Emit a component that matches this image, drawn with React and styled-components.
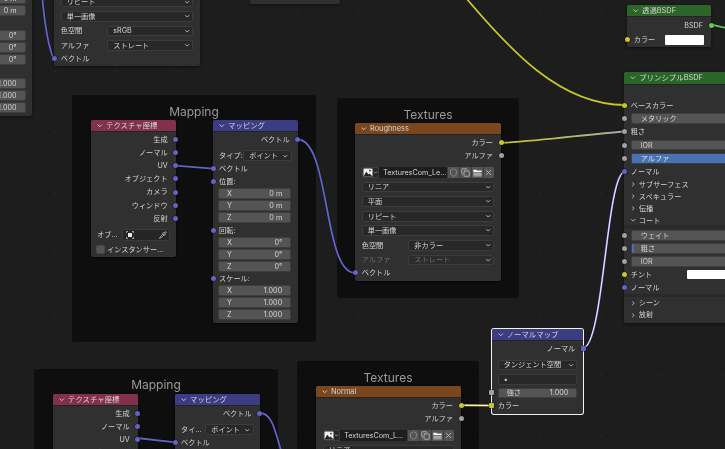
import React from "react";
import styled, { createGlobalStyle } from "styled-components";
import { ChevronDown, ChevronRight, Shield, Copy, X, Pipette } from "lucide-react";

const FONT = `Inter, "Noto Sans CJK JP", sans-serif`;
const SOCKET = { blue: "#6363c7", yellow: "#c7c729", grey: "#a1a1a1", green: "#63c763" };

const Global = createGlobalStyle`
  html, body { margin: 0; padding: 0; background: #1d1d1d; }
  * { box-sizing: border-box; }
`;

const Canvas = styled.div`
  position: relative;
  width: 725px;
  height: 449px;
  overflow: hidden;
  background-color: #1d1d1d;
  background-image: radial-gradient(circle, #2b2b2b 0.7px, transparent 1.1px);
  background-size: 60.7px 60.7px;
  background-position: 24.65px -19.35px;
  font-family: ${FONT};
  font-size: 7.2px;
  line-height: 1;
  color: #d4d4d4;
  white-space: nowrap;
  filter: blur(0.3px);
`;

const Frame = styled.section`
  position: absolute;
  left: ${(p) => p.$x}px;
  top: ${(p) => p.$y}px;
  width: ${(p) => p.$w}px;
  height: ${(p) => p.$h}px;
  background: #0e0e0e;
  border-radius: 3px;
  display: flex;
  justify-content: center;
  padding-top: ${(p) => p.$pad}px;
`;

const FrameTitle = styled.div`
  font-size: 12px;
  line-height: 14px;
  color: #9b9b9b;
`;

const Wires = styled.svg`
  position: absolute;
  left: 0;
  top: 0;
  width: 725px;
  height: 449px;
`;

const NodeBox = styled.article`
  position: absolute;
  left: ${(p) => p.$x}px;
  top: ${(p) => p.$y}px;
  width: ${(p) => p.$w}px;
  background: #303030;
  border-radius: 2px;
  box-shadow: ${(p) => (p.$selected ? "0 0 0 1px #f2f2f2" : "0 1px 3px rgba(0,0,0,.55)")};
  padding-bottom: ${(p) => p.$bottom ?? 2}px;
`;

const Header = styled.header`
  height: 11.3px;
  background: ${(p) => p.$color};
  border-radius: 2px 2px 0 0;
  display: flex;
  align-items: center;
  gap: 2.5px;
  padding-left: 5px;
  color: #d6d6d6;
  font-size: 7.4px;
  box-shadow: 0 1px 0 rgba(0, 0, 0, 0.25);
`;

const Row = styled.div`
  position: relative;
  height: ${(p) => p.$h ?? 13.2}px;
  margin-top: ${(p) => p.$mt ?? 0}px;
  padding: 0 ${(p) => p.$px ?? 6}px;
  display: flex;
  align-items: center;
  justify-content: ${(p) => (p.$out ? "flex-end" : "flex-start")};
`;

const OutRow = styled(Row).attrs({ $out: true, $px: 8 })``;

const Dot = styled.i`
  position: absolute;
  top: 50%;
  ${(p) => (p.$right ? "right: -2.5px;" : "left: -2.5px;")}
  width: 5px;
  height: 5px;
  margin-top: -2.5px;
  border-radius: ${(p) => (p.$square ? "1px" : "50%")};
  background: ${(p) => SOCKET[p.$kind]};
  box-shadow: 0 0 0 0.5px rgba(0, 0, 0, 0.55);
`;

const Select = styled.div`
  flex: ${(p) => (p.$w ? `0 0 ${p.$w}px` : 1)};
  margin-left: ${(p) => (p.$w ? "auto" : 0)};
  height: ${(p) => p.$h ?? 10.8}px;
  display: flex;
  align-items: center;
  justify-content: space-between;
  padding: 0 2px 0 5px;
  background: ${(p) => (p.$off ? "#2c2c2c" : "#282828")};
  border: 1px solid #3c3c3c;
  border-radius: 2px;
  color: ${(p) => (p.$off ? "#6c6c6c" : "#d4d4d4")};
`;

const Muted = styled.span`
  color: ${(p) => (p.$off ? "#6c6c6c" : "inherit")};
`;

const Fields = styled.div`
  display: flex;
  flex-direction: column;
  gap: 1px;
  padding: 0 6.5px 0 5px;
  margin-bottom: 0.3px;
`;

const NumField = styled.div`
  height: 11px;
  display: flex;
  align-items: center;
  justify-content: space-between;
  padding: 0 8px;
  background: #545454;
  border: 1px solid #3e3e3e;
  border-radius: 2px;
`;

const StrengthField = styled(NumField)`
  flex: 1;
  height: 10.8px;
`;

const Slider = styled.div`
  flex: 1;
  height: 10.4px;
  display: flex;
  align-items: center;
  padding-left: 9px;
  border-radius: 2px;
  border: 1px solid #3e3e3e;
  background: ${(p) =>
    p.$fill === "full"
      ? "#4772b3"
      : p.$fill === "tick"
      ? "linear-gradient(90deg, #4772b3 0 2px, #545454 2px)"
      : "#545454"};
  color: ${(p) => (p.$fill === "full" ? "#e4e4e4" : "#d4d4d4")};
`;

const DataBlock = styled.div`
  flex: 1;
  display: flex;
  height: 10.2px;
`;

const ImageBtn = styled.div`
  flex: 0 0 16.7px;
  display: flex;
  align-items: center;
  justify-content: center;
  background: #282828;
  border: 1px solid #3c3c3c;
  border-radius: 2px 0 0 2px;
`;

const NameField = styled.div`
  flex: 1;
  min-width: 0;
  display: flex;
  align-items: center;
  padding-left: 4.5px;
  background: #1d1d1d;
  overflow: hidden;
`;

const ActionBtn = styled.div`
  flex: 0 0 11.8px;
  display: flex;
  align-items: center;
  justify-content: center;
  background: #545454;
  border-left: 1px solid #3c3c3c;
  color: #c4c4c4;
  border-radius: ${(p) => (p.$last ? "0 2px 2px 0" : 0)};
`;

const ObjectField = styled.div`
  width: 48px;
  margin-left: auto;
  height: 11.4px;
  display: flex;
  align-items: center;
  justify-content: space-between;
  padding: 0 1.5px 0 3px;
  background: #252525;
  border: 1px solid #3a3a3a;
  border-radius: 2px;
`;

const Check = styled.span`
  width: 8.7px;
  height: 8.7px;
  margin-right: 2px;
  border-radius: 2px;
  background: #545454;
  border: 1px solid #484848;
`;

const Swatch = styled.div`
  width: ${(p) => p.$w}px;
  height: 9.6px;
  margin-left: auto;
  flex: none;
  background: #fff;
  border-radius: 1px;
`;

const PanelRow = styled.div`
  height: 12px;
  padding-left: 5.5px;
  display: flex;
  align-items: center;
  gap: 2.5px;
`;

const Band = styled.div`
  height: ${(p) => p.$h}px;
  margin-top: ${(p) => p.$mt}px;
  background: #292929;
`;

const Spacer = styled.div`
  height: ${(p) => p.$h}px;
`;

const Down = ({ size = 7.5 }) => <ChevronDown size={size} strokeWidth={3} color="#d0d0d0" />;

const ImageIcon = () => (
  <svg width="10" height="9" viewBox="0 0 10 9">
    <rect x="0.5" y="0.5" width="9" height="8" fill="#eee" rx="0.6" />
    <path d="M0.5 8.5 L3.2 3.8 L5.5 6.5 L6.6 5.5 L9.5 8.5 Z" fill="#222" />
    <circle cx="7" cy="2.6" r="0.9" fill="#333" />
  </svg>
);

const FolderIcon = () => (
  <svg width="9" height="8" viewBox="0 0 9 8">
    <path d="M0.3 0.8 H3.4 L4.2 1.6 H8.7 V3 H0.3 Z" fill="#f0f0f0" />
    <rect x="0.3" y="3.4" width="8.4" height="4.2" fill="#9a9a9a" />
    <path d="M1.5 5 H3 M4 5 H5.5 M6.5 5 H7.7" stroke="#eee" strokeWidth="0.6" />
  </svg>
);

const ObjIcon = () => (
  <svg width="8" height="8" viewBox="0 0 8 8">
    <rect x="2" y="2" width="4" height="4" fill="#e8e8e8" />
    <path d="M0.4 2V0.4H2 M6 0.4H7.6V2 M7.6 6V7.6H6 M2 7.6H0.4V6" stroke="#ddd" strokeWidth="0.7" fill="none" />
  </svg>
);

const Node = ({ x, y, w, color, title, selected, bottom, children }) => (
  <NodeBox $x={x} $y={y} $w={w} $selected={selected} $bottom={bottom}>
    <Header $color={color}>
      <Down />
      <span>{title}</span>
    </Header>
    {children}
  </NodeBox>
);

const TextureNode = ({ x, y, w = 146, title, space, alpha, dim, name = "TexturesCom_Le..." }) => (
  <Node x={x} y={y} w={w} color="#79461d" title={title} bottom={1.5}>
    <Spacer $h={1.8} />
    <OutRow>
      カラー
      <Dot $right $kind="yellow" />
    </OutRow>
    <OutRow>
      アルファ
      <Dot $right $kind="grey" />
    </OutRow>
    <Row $h={10.2} $mt={5} $px={6.7}>
      <DataBlock>
        <ImageBtn>
          <ImageIcon />
          <ChevronDown size={5} strokeWidth={3} color="#ccc" />
        </ImageBtn>
        <NameField>{name}</NameField>
        <ActionBtn>
          <Shield size={9} strokeWidth={1.8} color="#9c9c9c" />
        </ActionBtn>
        <ActionBtn>
          <Copy size={9} strokeWidth={2} />
        </ActionBtn>
        <ActionBtn>
          <FolderIcon />
        </ActionBtn>
        <ActionBtn $last>
          <X size={9} strokeWidth={2} />
        </ActionBtn>
      </DataBlock>
    </Row>
    {["リニア", "平面", "リピート", "単一画像"].map((t, i) => (
      <Row key={t} $h={10.8} $mt={i === 0 ? 3.9 : 3.8} $px={6.7}>
        <Select>
          {t}
          <Down size={6.5} />
        </Select>
      </Row>
    ))}
    <Row $h={10.8} $mt={3.8} $px={6.7}>
      色空間
      <Select $w={86}>
        {space}
        <Down size={6.5} />
      </Select>
    </Row>
    <Row $h={10.8} $mt={3.8} $px={6.7}>
      <Muted $off={dim}>アルファ</Muted>
      <Select $w={86} $off={dim}>
        {alpha}
        <Down size={6.5} />
      </Select>
    </Row>
    <Row $h={13} $mt={0.7} $px={6.7}>
      ベクトル
      <Dot $kind="blue" />
    </Row>
  </Node>
);

const CoordNode = ({ x, y }) => (
  <Node x={x} y={y} w={84.7} color="#83314a" title="テクスチャ座標" bottom={1.8}>
    <Spacer $h={1.4} />
    {["生成", "ノーマル", "UV", "オブジェクト", "カメラ", "ウィンドウ", "反射"].map((t) => (
      <OutRow key={t}>
        {t}
        <Dot $right $kind="blue" />
      </OutRow>
    ))}
    <Row $h={11.4} $mt={4.4}>
      オブ...
      <ObjectField>
        <ObjIcon />
        <Pipette size={8} strokeWidth={2} color="#d8d8d8" />
      </ObjectField>
    </Row>
    <Row $h={12} $mt={2.4} $px={5.3}>
      <Check />
      インスタンサー...
    </Row>
  </Node>
);

const Vector = ({ label, values }) => (
  <>
    <Row $h={13}>
      {label}
      <Dot $kind="blue" />
    </Row>
    <Fields>
      {["X", "Y", "Z"].map((a) => (
        <NumField key={a}>
          <span>{a}</span>
          <span>{values}</span>
        </NumField>
      ))}
    </Fields>
  </>
);

const MappingNode = ({ x, y, typeLabel = "タイプ:" }) => (
  <Node x={x} y={y} w={84.7} color="#3c3c83" title="マッピング" bottom={2.7}>
    <Spacer $h={1.7} />
    <OutRow>
      ベクトル
      <Dot $right $kind="blue" />
    </OutRow>
    <Row $h={11} $mt={4.1}>
      {typeLabel}
      <Select $w={48.4} $h={11}>
        ポイント
        <Down size={6.5} />
      </Select>
    </Row>
    <Row $h={13} $mt={1.1}>
      ベクトル
      <Dot $kind="blue" />
    </Row>
    <Vector label="位置:" values="0 m" />
    <Vector label="回転:" values="0°" />
    <Vector label="スケール:" values="1.000" />
  </Node>
);

const PInput = ({ kind, children, h = 13.3 }) => (
  <Row $h={h} $px={6.4}>
    {children}
    <Dot $kind={kind} />
  </Row>
);

const Panel = ({ open, children }) => (
  <PanelRow>
    {open ? <Down size={6.5} /> : <ChevronRight size={6.5} strokeWidth={3} color="#d0d0d0" />}
    <span>{children}</span>
  </PanelRow>
);

const Wire = ({ d, color, core, w = 1.8 }) => (
  <g fill="none" strokeLinecap="round">
    <path d={d} stroke="#000" strokeOpacity="0.4" strokeWidth={w + 1} />
    <path d={d} stroke={color} strokeWidth={w} />
    {core && <path d={d} stroke={core} strokeWidth="1" />}
  </g>
);

export default function App() {
  return (
    <Canvas>
      <Global />
      <Frame $x={72} $y={95} $w={244} $h={247} $pad={10}>
        <FrameTitle>Mapping</FrameTitle>
      </Frame>
      <Frame $x={337} $y={98} $w={182} $h={200} $pad={10}>
        <FrameTitle>Textures</FrameTitle>
      </Frame>
      <Frame $x={34} $y={369} $w={244} $h={120} $pad={9}>
        <FrameTitle>Mapping</FrameTitle>
      </Frame>
      <Frame $x={297} $y={361} $w={182} $h={120} $pad={10}>
        <FrameTitle>Textures</FrameTitle>
      </Frame>

      <Wires viewBox="0 0 725 449">
        <defs>
          <linearGradient id="rough" gradientUnits="userSpaceOnUse" x1="501" y1="143" x2="625" y2="131">
            <stop offset="0" stopColor="#c7c729" />
            <stop offset="1" stopColor="#a8a8a8" />
          </linearGradient>
        </defs>
        <Wire d="M466 -2 C510 50 560 105 625 105" color="#c7c729" />
        <Wire d="M501 143 C540 141 590 134 625 131.5" color="url(#rough)" />
        <Wire d="M711 25 C716 25 720 27 726 27.7" color="#63c763" />
        <Wire d="M40 -30 C43 10 46 40 53.5 59" color="#6363c7" />
        <Wire d="M175.7 165.7 L213 168.6" color="#6363c7" />
        <Wire d="M297.7 139.5 C330 139.5 323 273 355 273" color="#6363c7" />
        <Wire d="M137 438 L175.5 442.3" color="#6363c7" />
        <Wire d="M259.7 413 C280 413 275 460 300 490" color="#6363c7" />
        <Wire d="M583 348 C604 348 606 171.5 625 171.5" color="#7d7dd6" core="#ecebff" w={2} />
        <Wire d="M461 405.3 L492 405.6" color="#c7c729" core="#f4f4e8" w={2} />
      </Wires>

      <TextureNode x={54} y={-91.3} title="Image" space="sRGB" alpha="ストレート" />
      <MappingNode x={-52.7} y={-87} />

      <NodeBox $x={250} $y={-40} $w={90} $bottom={43.5} />

      <CoordNode x={91} y={120} />
      <MappingNode x={213} y={120} />
      <TextureNode x={355} y={123} title="Roughness" space="非カラー" alpha="ストレート" dim />

      <CoordNode x={53} y={394} />
      <MappingNode x={175} y={394} typeLabel="タイ..." />
      <TextureNode x={316} y={386} w={145} title="Normal" space="非カラー" alpha="ストレート" dim name="TexturesCom_L..." />

      <Node x={627} y={5} w={84} color="#2b6529" title="透過BSDF" bottom={0}>
        <Spacer $h={2.3} />
        <OutRow>
          BSDF
          <Dot $right $kind="green" />
        </OutRow>
        <Row $h={14.2} $mt={1} $px={6.7}>
          カラー
          <Swatch $w={39} />
          <Dot $kind="yellow" />
        </Row>
      </Node>

      <Node x={624.3} y={72.3} w={146} color="#2b6529" title="プリンシプルBSDF" bottom={2}>
        <Spacer $h={15} />
        <PInput kind="yellow">ベースカラー</PInput>
        <PInput kind="grey">
          <Slider>メタリック</Slider>
        </PInput>
        <PInput kind="grey">粗さ</PInput>
        <PInput kind="grey">
          <Slider>IOR</Slider>
        </PInput>
        <PInput kind="grey">
          <Slider $fill="full">アルファ</Slider>
        </PInput>
        <PInput kind="blue">ノーマル</PInput>
        <Panel>サブサーフェス</Panel>
        <Panel>スペキュラー</Panel>
        <Panel>伝播</Panel>
        <Panel open>コート</Panel>
        <Band $h={4.2} $mt={-1.4} />
        <PInput kind="grey" h={13}>
          <Slider>ウェイト</Slider>
        </PInput>
        <PInput kind="grey" h={13}>
          <Slider $fill="tick">粗さ</Slider>
        </PInput>
        <PInput kind="grey" h={13}>
          <Slider>IOR</Slider>
        </PInput>
        <PInput kind="yellow" h={13}>
          チント
          <Swatch $w={77} />
        </PInput>
        <PInput kind="blue" h={13}>
          ノーマル
        </PInput>
        <Band $h={2.6} $mt={0} />
        <Panel>シーン</Panel>
        <Panel>放射</Panel>
      </Node>

      <Node x={491.7} y={328.7} w={91.6} color="#3c3c83" title="ノーマルマップ" selected bottom={2}>
        <Spacer $h={2} />
        <OutRow>
          ノーマル
          <Dot $right $square $kind="blue" />
        </OutRow>
        <Row $h={10.8} $mt={4.5} $px={6}>
          <Select>
            タンジェント空間
            <Down size={6.5} />
          </Select>
        </Row>
        <Row $h={11.3} $mt={3.6} $px={6}>
          <Select $h={11.3}>•</Select>
        </Row>
        <Row $h={10.8} $mt={2.2} $px={6}>
          <StrengthField>
            <span>強さ</span>
            <span>1.000</span>
          </StrengthField>
          <Dot $square $kind="grey" />
        </Row>
        <Row $h={13} $mt={0.6} $px={6}>
          カラー
          <Dot $square $kind="yellow" />
        </Row>
      </Node>
    </Canvas>
  );
}
